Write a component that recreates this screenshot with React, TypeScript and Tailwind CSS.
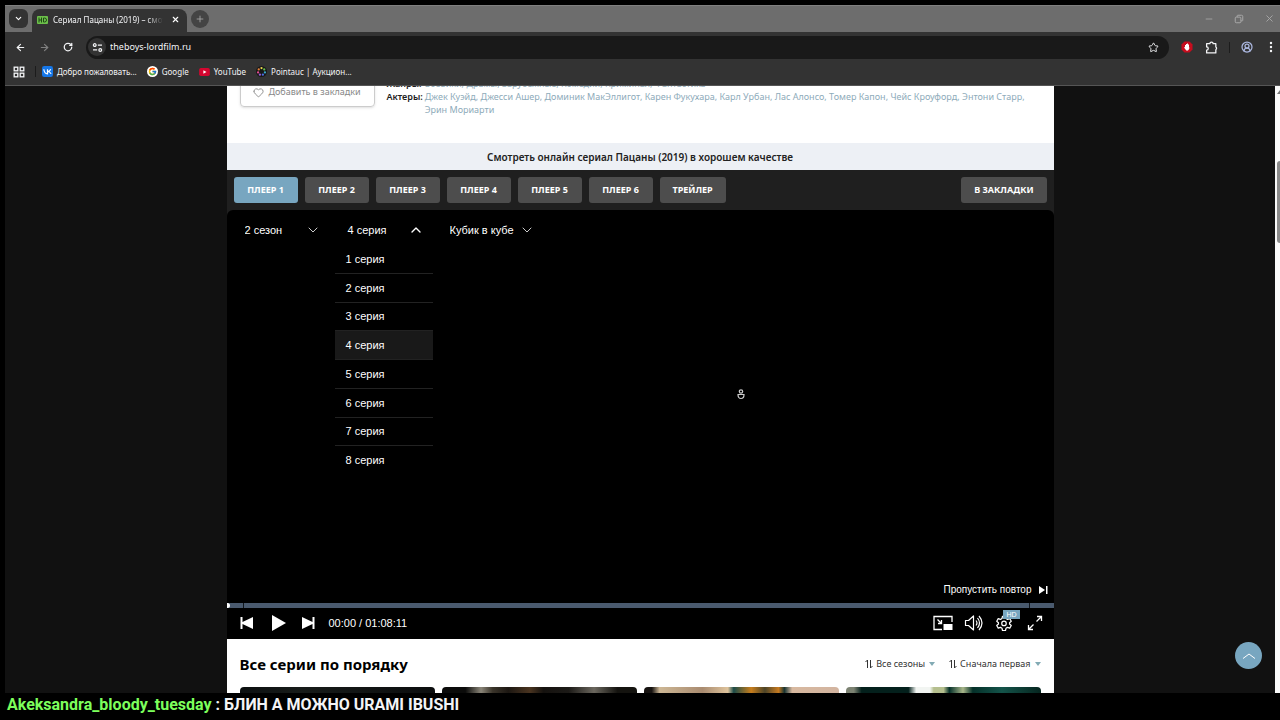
import { Fragment, type ReactNode } from "react";
import {
    ArrowLeft,
    ArrowRight,
    ChevronDown,
    ChevronUp,
    CircleUserRound,
    Heart,
    Minus,
    Plus,
    RotateCw,
    Star,
    X,
} from "lucide-react";
import { FcGoogle } from "react-icons/fc";

const players = ["ПЛЕЕР 1", "ПЛЕЕР 2", "ПЛЕЕР 3", "ПЛЕЕР 4", "ПЛЕЕР 5", "ПЛЕЕР 6", "ТРЕЙЛЕР"];
const episodes = [1, 2, 3, 4, 5, 6, 7, 8];
const currentEpisode = 4;

const genres = ["Боевики", "Драмы", "Зарубежные", "Комедии", "Криминал", "Фантастика"];
const actors = [
    "Джек Куэйд",
    "Джесси Ашер",
    "Доминик МакЭллигот",
    "Карен Фукухара",
    "Карл Урбан",
    "Лас Алонсо",
    "Томер Капон",
    "Чейс Кроуфорд",
    "Энтони Старр",
    "Эрин Мориарти",
];

function TabStrip() {
    return (
        <div className="flex h-[27px] items-end border-t border-[#808080] bg-[#6d6d6d] pl-1">
            <button aria-label="Поиск вкладок" className="mb-1 flex size-[19px] items-center justify-center rounded-md bg-[#333] text-white">
                <ChevronDown size={9} strokeWidth={3} />
            </button>
            <div className="ml-1 flex h-[23px] w-[155px] items-center rounded-t-lg bg-[#333] pb-0.5 pl-[5px] pr-1">
                <svg viewBox="0 0 22 16" className="h-2 w-[11px] shrink-0">
                    <rect width="22" height="16" rx="2" fill="#6cc04a" />
                    <path d="M4 3v10M9 3v10M4 8h5M13 4v8h2q4 0 4-4t-4-4z" fill="none" stroke="#1f4a14" strokeWidth="2" />
                </svg>
                <span className="ml-[5px] flex-1 overflow-hidden whitespace-nowrap text-[8px] text-gray-100 [mask-image:linear-gradient(to_right,black_85%,transparent)]">
                    Сериал Пацаны (2019) – смотреть
                </span>
                <button aria-label="Закрыть вкладку" className="ml-1 flex size-4 items-center justify-center text-white">
                    <X size={9} strokeWidth={3} />
                </button>
            </div>
            <button aria-label="Новая вкладка" className="mb-1 ml-1 flex size-[18px] items-center justify-center rounded-full bg-[#444] text-[#aaa]">
                <Plus size={10} />
            </button>
            <div className="mb-2 ml-auto flex items-center gap-5 pr-[5px] text-[#a8a8a8]">
                <button aria-label="Свернуть"><Minus size={10} strokeWidth={2} /></button>
                <button aria-label="Восстановить">
                    <svg viewBox="0 0 16 16" className="size-[10px]" fill="none" stroke="currentColor" strokeWidth="1.6">
                        <rect x="2" y="5" width="9" height="9" rx="1.5" />
                        <path d="M5 5V3q0-1 1-1h6q2 0 2 2v6q0 1-1 1h-2" />
                    </svg>
                </button>
                <button aria-label="Закрыть"><X size={11} strokeWidth={2} /></button>
            </div>
        </div>
    );
}

function AddressBar() {
    return (
        <div className="flex h-[30px] items-center bg-[#333] pl-[9px] pr-[3px] text-gray-100">
            <button aria-label="Назад" className="flex size-3 items-center justify-center"><ArrowLeft size={11} strokeWidth={2.5} /></button>
            <button aria-label="Вперёд" className="ml-3 flex size-3 items-center justify-center text-[#808080]"><ArrowRight size={11} strokeWidth={2.5} /></button>
            <button aria-label="Обновить" className="ml-3 flex size-3 items-center justify-center"><RotateCw size={10} strokeWidth={3} /></button>
            <div className="ml-3 flex h-[23px] flex-1 items-center rounded-full bg-[#191919] pl-0.5 pr-[10px]">
                <span className="flex size-[18px] items-center justify-center rounded-full bg-[#333]">
                    <svg viewBox="0 0 16 16" className="size-[11px]" fill="none" stroke="currentColor" strokeWidth="1.8">
                        <circle cx="4" cy="4.5" r="2" />
                        <path d="M8.5 4.5h6M1.5 11.5h6" />
                        <circle cx="12" cy="11.5" r="2" />
                    </svg>
                </span>
                <input aria-label="Адрес" defaultValue="theboys-lordfilm.ru" className="ml-1 min-w-0 flex-1 bg-transparent text-[9px] outline-none" />
                <button aria-label="Добавить в избранное"><Star size={11} strokeWidth={2} /></button>
            </div>
            <button aria-label="Блокировщик" className="ml-3">
                <svg viewBox="0 0 24 24" className="size-3">
                    <path d="M7 1h10l6 6v10l-6 6H7l-6-6V7z" fill="#c70d1e" />
                    <path d="M8 12V8h2V6h2V5h2v2h2v5l1 2-2 4q-4 3-6-1l-3-4z" fill="#fff" />
                </svg>
            </button>
            <button aria-label="Расширения" className="ml-3">
                <svg viewBox="0 0 24 24" className="size-[13px]" fill="none" stroke="currentColor" strokeWidth="2.4" strokeLinejoin="round">
                    <path d="M3 5h6a3 3 0 0 1 6 0h5v6a3 3 0 0 1 0 5v6H3v-5q3 0 3-3t-3-3z" />
                </svg>
            </button>
            <span className="ml-[11px] h-[11px] w-px bg-[#1c1c1c]" />
            <button aria-label="Профиль" className="ml-[11px] text-[#aab6de]"><CircleUserRound size={12} strokeWidth={2.5} /></button>
            <button aria-label="Меню" className="ml-3">
                <svg viewBox="0 0 12 12" className="size-3" fill="currentColor">
                    <circle cx="6" cy="2" r="1.2" />
                    <circle cx="6" cy="6" r="1.2" />
                    <circle cx="6" cy="10" r="1.2" />
                </svg>
            </button>
        </div>
    );
}

function Bookmark({ icon, children }: { icon: ReactNode; children: ReactNode }) {
    return (
        <a href="#" className="flex items-center gap-1 whitespace-nowrap">
            {icon}
            {children}
        </a>
    );
}

function BookmarksBar() {
    return (
        <nav className="flex h-6 items-center gap-[10px] border-b border-[#555] bg-[#333] pb-1 pl-2 text-[8px] text-gray-100">
            <button aria-label="Приложения">
                <svg viewBox="0 0 20 20" className="size-3" fill="none" stroke="currentColor" strokeWidth="2.2">
                    <rect x="2" y="2" width="6" height="6" />
                    <rect x="12" y="2" width="6" height="6" />
                    <rect x="2" y="12" width="6" height="6" />
                    <rect x="12" y="12" width="6" height="6" />
                </svg>
            </button>
            <span className="-mr-1 h-[11px] w-px bg-[#1c1c1c]" />
            <Bookmark
                icon={
                    <svg viewBox="0 0 24 24" className="size-[11px]">
                        <rect width="24" height="24" rx="5" fill="#1677e8" />
                        <path d="M4 7q1 10 8 10V7M12 12q5 0 7-5M12 12q5 0 8 5" fill="none" stroke="#fff" strokeWidth="2.6" />
                    </svg>
                }
            >
                Добро пожаловать...
            </Bookmark>
            <Bookmark icon={<span className="rounded-full bg-white p-px"><FcGoogle size={9} /></span>}>Google</Bookmark>
            <Bookmark
                icon={
                    <svg viewBox="0 0 24 18" className="h-2 w-[11px]">
                        <rect width="24" height="18" rx="4" fill="#d3062f" />
                        <path d="M9.5 5v8l7-4z" fill="#fff" />
                    </svg>
                }
            >
                YouTube
            </Bookmark>
            <Bookmark
                icon={
                    <svg viewBox="0 0 24 24" className="size-[11px]">
                        <circle cx="12" cy="12" r="12" fill="#181818" />
                        <circle cx="12" cy="4.5" r="2.5" fill="#e8d44d" />
                        <circle cx="18" cy="7.5" r="2.5" fill="#65c04d" />
                        <circle cx="19.5" cy="14" r="2.5" fill="#39a7c8" />
                        <circle cx="15" cy="19" r="2.5" fill="#4a6de0" />
                        <circle cx="8.5" cy="19" r="2.5" fill="#9b59d0" />
                        <circle cx="4.5" cy="14" r="2.5" fill="#e14a8f" />
                        <circle cx="6" cy="7.5" r="2.5" fill="#e5813a" />
                    </svg>
                }
            >
                Pointauc | Аукцион...
            </Bookmark>
        </nav>
    );
}

function LinkList({ items }: { items: string[] }) {
    return (
        <dd className="text-[#8eabba]">
            {items.map((item, i) => (
                <Fragment key={item}>
                    <a href="#">{item}</a>
                    {i < items.length - 1 && ", "}
                </Fragment>
            ))}
        </dd>
    );
}

function MovieInfo() {
    return (
        <section className="flex items-start gap-3 px-[13px] pb-[27px]">
            <button className="flex h-[30px] w-[135px] shrink-0 items-center justify-center gap-1 rounded-sm border border-[#ccc] text-[9px] text-[#888] shadow-sm">
                <Heart size={11} />
                Добавить в закладки
            </button>
            <dl className="grid grid-cols-[auto_1fr] gap-x-0.5 text-[9px] leading-[13px]">
                <dt className="font-semibold text-[#222]">Жанры:</dt>
                <LinkList items={genres} />
                <dt className="font-semibold text-[#222]">Актеры:</dt>
                <LinkList items={actors} />
            </dl>
        </section>
    );
}

function PlayerTabs() {
    return (
        <div className="flex gap-[7px] bg-[#1f1f1f] p-[7px] text-[9px] font-bold text-white">
            {players.map((name, i) => (
                <button key={name} className={`h-[26px] min-w-16 rounded-[3px] px-[13px] ${i === 0 ? "bg-[#78a6c0]" : "bg-[#4d4d4d]"}`}>
                    {name}
                </button>
            ))}
            <button className="ml-auto h-[26px] rounded-[3px] bg-[#4d4d4d] px-[13px]">В ЗАКЛАДКИ</button>
        </div>
    );
}

function PlayerSelect({ label, value, className }: { label: string; value: string; className: string }) {
    return (
        <label className={`relative flex items-center ${className}`}>
            <select aria-label={label} className="w-full appearance-none bg-transparent outline-none">
                <option>{value}</option>
            </select>
            <ChevronDown size={16} strokeWidth={1.5} className="pointer-events-none absolute right-0 text-[#ccc]" />
        </label>
    );
}

function EpisodeMenu() {
    return (
        <div className="relative w-[76px]">
            <button aria-expanded="true" className="flex h-[14px] w-full items-center justify-between">
                {currentEpisode} серия
                <ChevronUp size={16} strokeWidth={2} />
            </button>
            <ul className="absolute -left-[13px] top-[22px] flex h-[229px] w-[98px] flex-col">
                {episodes.map((n) => (
                    <li key={n} className={`flex-1 border-b border-[#222] last:border-b-0 ${n === currentEpisode ? "bg-[#191919]" : ""}`}>
                        <button className="h-full w-full pl-[11px] text-left">{n} серия</button>
                    </li>
                ))}
            </ul>
        </div>
    );
}

function PlayerControls() {
    return (
        <div className="flex h-[31px] items-center pb-px pl-[13px] pr-[11px]">
            <button aria-label="Предыдущая серия">
                <svg viewBox="0 0 14 14" className="size-[14px]" fill="currentColor"><path d="M.5 1h2v5L13 1v12L2.500 8v5h-2z" /></svg>
            </button>
            <button aria-label="Воспроизвести" className="ml-[17px]">
                <svg viewBox="0 0 16 18" className="h-[18px] w-4" fill="currentColor"><path d="M1 1l14 8-14 8z" /></svg>
            </button>
            <button aria-label="Следующая серия" className="ml-[14px]">
                <svg viewBox="0 0 14 14" className="size-[14px]" fill="currentColor"><path d="M13.500 1h-2v5L1 1v12l10.500-5v5h2z" /></svg>
            </button>
            <span className="ml-[14px]">00:00 / 01:08:11</span>
            <div className="ml-auto flex items-center gap-[11px]">
                <button aria-label="Картинка в картинке">
                    <svg viewBox="0 0 20 16" className="h-4 w-5" fill="none" stroke="currentColor" strokeWidth="1.3">
                        <path d="M19 7V1.5H1v13h8M4.5 4.5l4 4M8.5 5v3.5H5" />
                        <path d="M10.500 9H19.500v6h-9z" fill="currentColor" stroke="none" />
                    </svg>
                </button>
                <button aria-label="Громкость">
                    <svg viewBox="0 0 20 16" className="h-4 w-5" fill="none" stroke="currentColor" strokeWidth="1.2" strokeLinejoin="round">
                        <path d="M1.5 5.5h3L9.500 1v14l-5-4.500h-3zM12 5.500q2 2.500 0 5M13.500 3q4 5 0 10M15 1q6 7 0 14" />
                    </svg>
                </button>
                <button aria-label="Настройки" className="relative">
                    <svg viewBox="0 0 24 24" className="size-[18px]" fill="none" stroke="currentColor" strokeWidth="1.6" strokeLinejoin="round">
                        <path d="M10 3h4l.7 3 2 1.200 3-1 2 3.500-2.300 2v1.600l2.300 2-2 3.500-3-1-2 1.200-.7 3h-4l-.7-3-2-1.200-3 1-2-3.500 2.300-2v-1.600l-2.300-2 2-3.500 3 1 2-1.200z" />
                        <circle cx="12" cy="12.500" r="3" />
                    </svg>
                    <span className="absolute -right-[7px] -top-1 bg-[#78a6c0] px-[3px] text-[7px] leading-[9px]">HD</span>
                </button>
                <button aria-label="Во весь экран" className="ml-[3px]">
                    <svg viewBox="0 0 16 16" className="size-4" fill="none" stroke="currentColor" strokeWidth="1.3">
                        <path d="M9.5 6.5l5-5M10 1.5h4.5V6M6.5 9.5l-5 5M1.5 10v4.5H6" />
                    </svg>
                </button>
            </div>
        </div>
    );
}

function Player() {
    return (
        <div className="bg-[#1f1f1f]">
            <div className="flex aspect-[827/429] flex-col rounded-t-md bg-black font-['Liberation_Sans',Arial,sans-serif] text-[11px] text-white">
                <div className="flex gap-[27px] pl-[18px] pt-[13px] leading-[14px]">
                    <PlayerSelect label="Сезон" value="2 сезон" className="w-[76px]" />
                    <EpisodeMenu />
                    <PlayerSelect label="Озвучка" value="Кубик в кубе" className="-ml-px w-[85px]" />
                </div>
                <div className="flex flex-1 items-center justify-center pb-8">
                    <svg viewBox="0 0 8 12" className="ml-[201px] h-3 w-2" fill="none" stroke="#ccc" strokeWidth="1.2">
                        <circle cx="4" cy="3.500" r="1.7" />
                        <path d="M1 6.500h6q0 4-3 4t-3-4z" />
                    </svg>
                </div>
                <button className="flex items-center gap-[6px] self-end pb-[6px] pr-[6px] text-[10px]">
                    Пропустить повтор
                    <svg viewBox="0 0 10 10" className="size-[10px]" fill="currentColor"><path d="M1 1l6 4-6 4zM8 1h1.500v8H8z" /></svg>
                </button>
                <input
                    type="range"
                    aria-label="Перемотка"
                    defaultValue={0}
                    className="h-[5px] w-full appearance-none bg-[linear-gradient(to_right,#4a5a6e_1.9%,#10151b_1.9%,#10151b_2%,#4a5a6e_2%,#4a5a6e_97%,#10151b_97%,#10151b_97.1%,#4a5a6e_97.1%)] [&::-webkit-slider-thumb]:h-[5px] [&::-webkit-slider-thumb]:w-[3px] [&::-webkit-slider-thumb]:appearance-none [&::-webkit-slider-thumb]:rounded-r-full [&::-webkit-slider-thumb]:bg-white"
                />
                <PlayerControls />
            </div>
        </div>
    );
}

function SortButton({ children }: { children: ReactNode }) {
    return (
        <button className="flex items-center gap-[3px] text-[9px] text-[#333]">
            <svg viewBox="0 0 8 10" className="h-[10px] w-2" fill="none" stroke="currentColor">
                <path d="M2.500 9V1M.5 3l2-2M5.500 1v8M7.500 7l-2 2" />
            </svg>
            {children}
            <svg viewBox="0 0 6 4" className="ml-px h-1 w-[6px]" fill="#82aab4"><path d="M0 0h6L3 4z" /></svg>
        </button>
    );
}

const thumbs = [
    "bg-linear-to-r from-[#0c0f10] via-[#171b19] via-30% to-[#0b0d0e]",
    "bg-[linear-gradient(to_right,#0b0b0a_12%,#8a8578_20%,#3a342a_26%,#1c1712_34%,#4a3420_45%,#15120f_52%,#1c1a17_65%,#6b675e_78%,#14130f_90%)]",
    "bg-[linear-gradient(to_right,#161210_4%,#cdb795_8%,#a98b70_30%,#dec39c_43%,#1b4b48_46%,#c77d1c_55%,#4c4428_62%,#c67a20_69%,#173331_72%,#d8b9a0_76%,#d2b4a0)]",
    "bg-[linear-gradient(to_right,#7c8272_4%,#04201c_8%,#04201c_32%,#f2f5f2_36%,#f2f5f2_43%,#b5bf8e_45%,#b5bf8e_50%,#053029_53%,#a9b78a_60%,#053029_65%,#14544a_80%,#06251f)]",
];

function EpisodesSection() {
    return (
        <section className="px-[13px] pt-[14px]">
            <div className="flex items-center gap-[14px]">
                <h2 className="mr-auto text-[15px] leading-[22px] font-bold text-black">Все серии по порядку</h2>
                <SortButton>Все сезоны</SortButton>
                <SortButton>Сначала первая</SortButton>
            </div>
            <div className="mt-3 grid grid-cols-4 gap-[7px]">
                {thumbs.map((shade) => (
                    <a key={shade} href="#" aria-label="Серия" className={`aspect-video rounded-t-sm ${shade}`} />
                ))}
            </div>
        </section>
    );
}

function Scrollbar() {
    return (
        <div className="flex w-[5px] shrink-0 flex-col bg-[#fafafa] pt-1">
            <svg viewBox="0 0 3 4" className="ml-0.5 h-1 w-[3px]" fill="#777"><path d="M0 4l3-4v4z" /></svg>
            <div className="ml-0.5 mt-[67px] h-[82px] rounded-l-full bg-[#8b8b8b]" />
        </div>
    );
}

export default function App() {
    return (
        <div className="flex h-screen flex-col overflow-hidden bg-black pt-[5px] font-['Noto_Sans',sans-serif]">
            <div className="flex min-h-0 flex-1 flex-col pl-[5px]">
                <TabStrip />
                <AddressBar />
                <BookmarksBar />
                <div className="relative flex min-h-0 flex-1 overflow-hidden bg-[#111]">
                    <main className="-mt-[9px] min-w-0 flex-1">
                        <div className="mx-auto max-w-[827px] bg-white">
                            <MovieInfo />
                            <h1 className="bg-[#edf0f5] pt-0.5 text-center text-[10px] leading-[25px] font-semibold text-[#222]">
                                Смотреть онлайн сериал Пацаны (2019) в хорошем качестве
                            </h1>
                            <PlayerTabs />
                            <Player />
                            <EpisodesSection />
                        </div>
                    </main>
                    <Scrollbar />
                    <button aria-label="Наверх" className="absolute bottom-6 right-[18px] flex size-[27px] items-center justify-center rounded-full bg-[#78a6c0] text-white">
                        <svg viewBox="0 0 14 6" className="h-[6px] w-[14px]" fill="none" stroke="currentColor"><path d="M1 5.500L7 1l6 4.500" /></svg>
                    </button>
                </div>
            </div>
            <p className="h-[27px] shrink-0 pl-[7px] font-['Roboto',sans-serif] text-base leading-6 font-bold text-gray-100">
                <span className="text-[#7dff5c]">Akeksandra_bloody_tuesday</span> : БЛИН А МОЖНО URAMI IBUSHI
            </p>
        </div>
    );
}
